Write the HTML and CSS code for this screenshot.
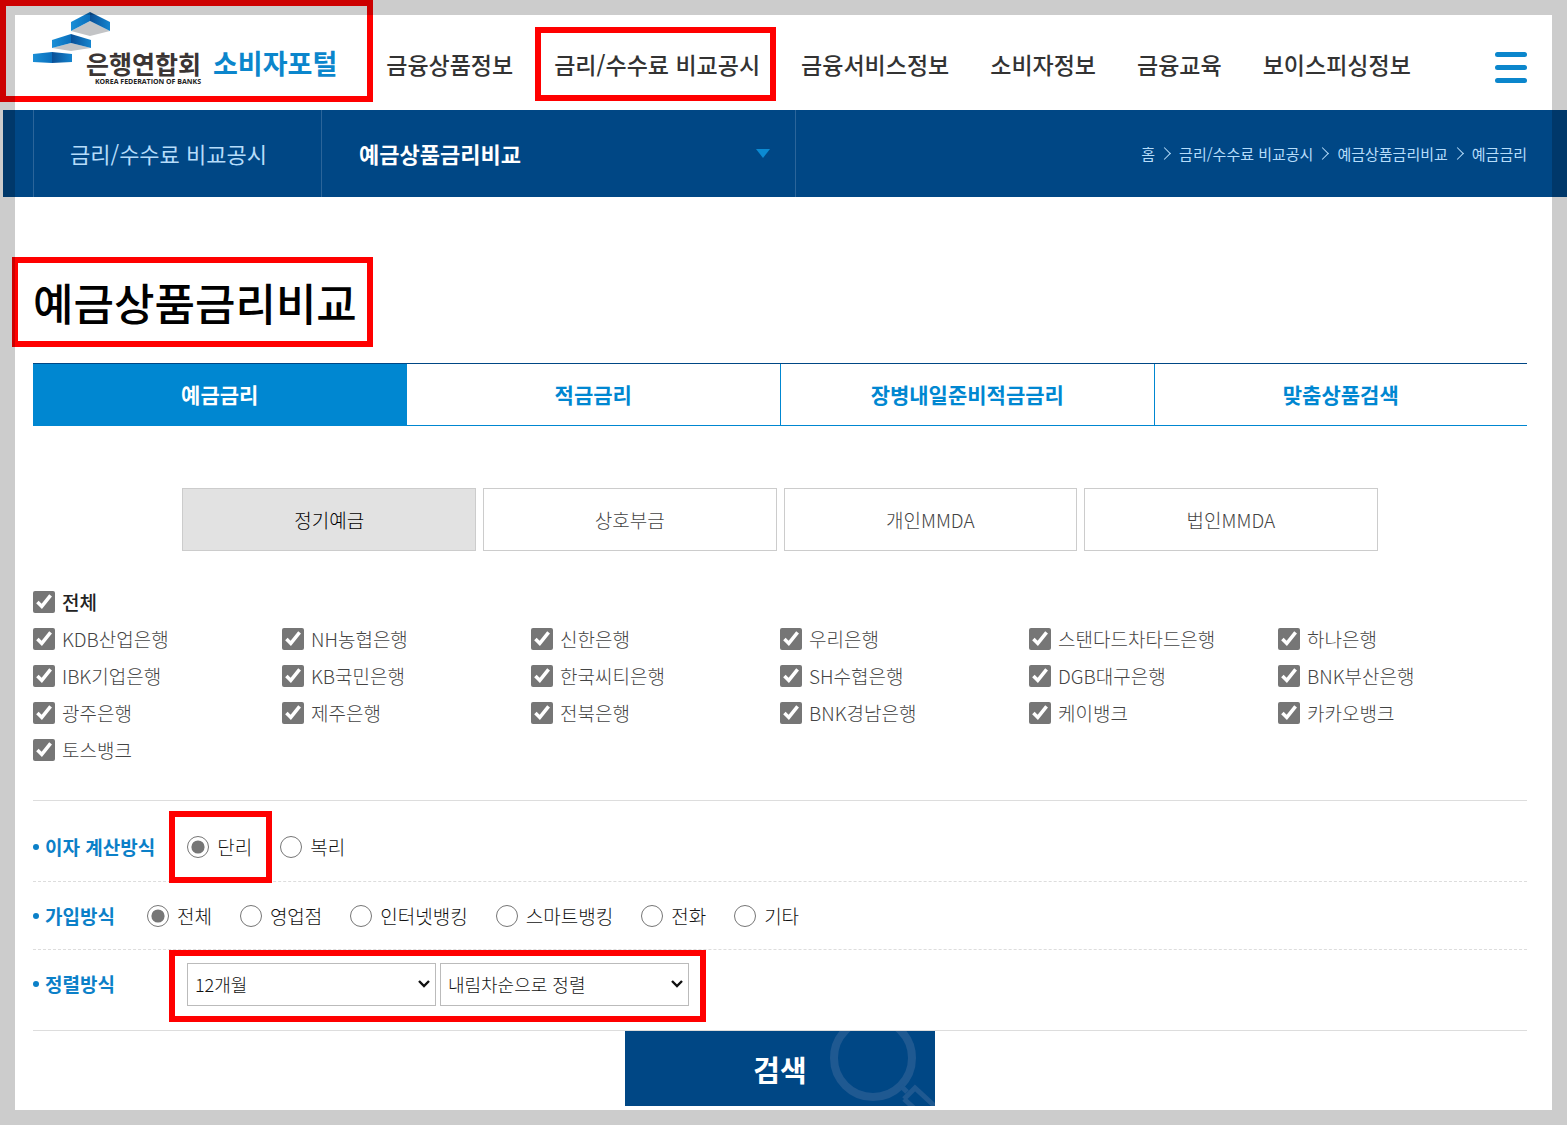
FILE: index.html
```html
<!DOCTYPE html>
<html lang="ko">
<head>
<meta charset="utf-8">
<meta name="viewport" content="width=device-width, initial-scale=1">
<title>예금상품금리비교 - 은행연합회 소비자포털</title>
<link rel="stylesheet" href="styles.css">
</head>
<body>
<header class="header">
  <a class="logo marked marked-logo" href="#">
    <svg class="logo-mark" viewBox="0 0 78 52" width="78" height="52" aria-hidden="true">
      <defs>
        <linearGradient id="face" x1="0" x2="1" y1="0" y2="0"><stop offset="0" stop-color="#1b8fd6"/><stop offset="1" stop-color="#0a6fbd"/></linearGradient>
        <linearGradient id="side" x1="0" x2="1" y1="0" y2="0"><stop offset="0" stop-color="#0a4f96"/><stop offset="1" stop-color="#1585cf"/></linearGradient>
      </defs>
      <path fill="#c3c4c6" d="M38 19 57 9 77 19 57 24zM19 36 38 31 58 36 38 39z"/>
      <path fill="url(#face)" d="M38 10 57 0V9L38 19z"/>
      <path fill="url(#side)" d="M57 0 77 10V19L57 9z"/>
      <path fill="url(#face)" d="M19 28 38 22V31L19 36z"/>
      <path fill="url(#side)" d="M38 22 58 28V36L38 31z"/>
      <path fill="url(#face)" d="M0 42 19 40V51L0 50z"/>
      <path fill="url(#side)" d="M19 40 39 42V50L19 51z"/>
    </svg>
    <span class="logo-name"><strong>은행연합회</strong><small>KOREA FEDERATION OF BANKS</small></span>
    <span class="logo-portal">소비자포털</span>
  </a>
  <nav class="gnb" aria-label="주 메뉴">
    <a href="#">금융상품정보</a>
    <a class="marked marked-nav" href="#">금리/수수료 비교공시</a>
    <a href="#">금융서비스정보</a>
    <a href="#">소비자정보</a>
    <a href="#">금융교육</a>
    <a href="#">보이스피싱정보</a>
  </nav>
  <button class="menu" type="button" aria-label="전체 메뉴"><span></span><span></span><span></span></button>
</header>

<div class="location">
  <a class="location-section" href="#">금리/수수료 비교공시</a>
  <button class="location-page" type="button">예금상품금리비교<span class="arrow"></span></button>
  <nav class="crumbs" aria-label="현재 위치">
    <a href="#">홈</a><i></i><a href="#">금리/수수료 비교공시</a><i></i><a href="#">예금상품금리비교</a><i></i><a href="#">예금금리</a>
  </nav>
</div>

<main class="content">
  <h1 class="title"><span class="marked marked-title">예금상품금리비교</span></h1>
  <nav class="tabs" aria-label="금리 종류">
    <a class="on" href="#">예금금리</a><a href="#">적금금리</a><a href="#">장병내일준비적금금리</a><a href="#">맞춤상품검색</a>
  </nav>

  <form class="search">
    <div class="kinds">
      <button class="on" type="button">정기예금</button>
      <button type="button">상호부금</button>
      <button type="button">개인MMDA</button>
      <button type="button">법인MMDA</button>
    </div>

    <div class="banks">
      <label class="all"><input type="checkbox" checked>전체</label>
      <label><input type="checkbox" checked>KDB산업은행</label>
      <label><input type="checkbox" checked>NH농협은행</label>
      <label><input type="checkbox" checked>신한은행</label>
      <label><input type="checkbox" checked>우리은행</label>
      <label><input type="checkbox" checked>스탠다드차타드은행</label>
      <label><input type="checkbox" checked>하나은행</label>
      <label><input type="checkbox" checked>IBK기업은행</label>
      <label><input type="checkbox" checked>KB국민은행</label>
      <label><input type="checkbox" checked>한국씨티은행</label>
      <label><input type="checkbox" checked>SH수협은행</label>
      <label><input type="checkbox" checked>DGB대구은행</label>
      <label><input type="checkbox" checked>BNK부산은행</label>
      <label><input type="checkbox" checked>광주은행</label>
      <label><input type="checkbox" checked>제주은행</label>
      <label><input type="checkbox" checked>전북은행</label>
      <label><input type="checkbox" checked>BNK경남은행</label>
      <label><input type="checkbox" checked>케이뱅크</label>
      <label><input type="checkbox" checked>카카오뱅크</label>
      <label><input type="checkbox" checked>토스뱅크</label>
    </div>

    <div class="option option-first" role="group" aria-labelledby="calc">
      <span class="option-name" id="calc">이자 계산방식</span>
      <div class="choices">
        <label class="marked marked-radio"><input type="radio" name="calc" checked>단리</label>
        <label><input type="radio" name="calc">복리</label>
      </div>
    </div>
    <div class="option" role="group" aria-labelledby="join">
      <span class="option-name" id="join">가입방식</span>
      <div class="choices">
        <label><input type="radio" name="join" checked>전체</label>
        <label><input type="radio" name="join">영업점</label>
        <label><input type="radio" name="join">인터넷뱅킹</label>
        <label><input type="radio" name="join">스마트뱅킹</label>
        <label><input type="radio" name="join">전화</label>
        <label><input type="radio" name="join">기타</label>
      </div>
    </div>
    <div class="option option-last" role="group" aria-labelledby="sort">
      <span class="option-name" id="sort">정렬방식</span>
      <div class="selects marked marked-selects">
        <select aria-label="기간"><option>12개월</option></select>
        <select aria-label="정렬 순서"><option>내림차순으로 정렬</option></select>
      </div>
    </div>

    <button class="submit" type="submit">검색
      <svg class="submit-icon" viewBox="0 0 110 75" width="110" height="75" fill="none" stroke="#1f5991" aria-hidden="true">
        <circle cx="48" cy="27" r="39" stroke-width="8"/>
        <path stroke-width="5" d="M76 55 82 61M79 68 90 57 114 79M79 68 90 78"/>
      </svg>
    </button>
  </form>
</main>
</body>
</html>
```
FILE: styles.css
```css
* { box-sizing: border-box; }

body {
  margin: 0;
  background: #fff;
  color: #333;
  font-family: "Noto Sans CJK KR", sans-serif;
  font-size: 19px;
}

/* translucent frame laid over the whole window */
body::after {
  content: "";
  position: fixed;
  inset: 0;
  z-index: 10;
  border: 15px solid rgba(0, 0, 0, .2);
  pointer-events: none;
}

a { color: inherit; text-decoration: none; }
button, select, input { font: inherit; margin: 0; }
button { cursor: pointer; }

/* red call-out boxes */
.marked { position: relative; }
.marked::after {
  content: "";
  position: absolute;
  border: 6px solid #f00;
  pointer-events: none;
}
.marked-logo::after { inset: 0 -36px 8px -33px; }
.marked-nav::after { inset: -18px -16px -17px -19px; }
.marked-title::after { inset: 0 -16px 0 -21px; }
.marked-radio::after { inset: -22px -20px -22px -18px; }
.marked-selects::after { inset: -13px -17px -16px -18px; }

.header {
  display: flex;
  align-items: center;
  height: 110px;
  padding: 0 40px 0 33px;
  white-space: nowrap;
}
.logo {
  display: flex;
  gap: 12px;
  align-self: stretch;
  padding: 48px 0 0 53px;
}
.logo-mark { position: absolute; left: 0; top: 12px; }
.logo-name { display: flex; flex-direction: column; align-items: flex-end; }
.logo-name strong { font-size: 25px; line-height: 30px; color: #3b3534; }
.logo-name small {
  font: bold 7px/8px "Open Sans", sans-serif;
  color: #222;
}
.logo-portal { font-size: 27px; font-weight: 700; line-height: 30px; color: #0b86cc; }

.gnb {
  display: flex;
  gap: 41px;
  margin: 18px 0 0 49px;
  font-size: 23px;
  font-weight: 500;
  line-height: 39px;
}
.menu {
  display: flex;
  flex-direction: column;
  gap: 8px;
  width: 32px;
  margin: 24px 0 0 auto;
  padding: 0;
  border: 0;
  background: none;
}
.menu span { height: 5px; border-radius: 3px; background: #0b86cc; }

.location {
  display: flex;
  height: 87px;
  margin-left: 3px;
  padding: 0 40px 0 30px;
  background: #004785;
  color: #b5dcfa;
  font-size: 22px;
  line-height: 87px;
  white-space: nowrap;
}
.location-section {
  width: 288px;
  padding-left: 36px;
  border-left: 1px solid #2b659a;
}
.location-page {
  display: flex;
  justify-content: space-between;
  align-items: center;
  width: 475px;
  padding: 0 25px 0 37px;
  border: solid #2b659a;
  border-width: 0 1px;
  background: none;
  color: #fff;
  font-weight: 700;
}
.arrow {
  border: solid transparent;
  border-width: 9px 7px 0;
  border-top-color: #0b8ad2;
}
.crumbs {
  display: flex;
  align-items: center;
  margin-left: auto;
  font-size: 15px;
  line-height: 85px;
}
.crumbs i {
  width: 9px;
  height: 9px;
  margin: 0 10px 0 5px;
  border: solid #b5dcfa;
  border-width: 1px 1px 0 0;
  transform: rotate(45deg);
}

.content { padding: 60px 40px 19px 33px; }
.title {
  margin: 0 0 16px;
  color: #000;
  font-size: 44px;
  font-weight: 500;
  line-height: 90px;
}
.title span { display: inline-block; }

.tabs {
  display: grid;
  grid-template-columns: repeat(4, 1fr);
  height: 63px;
  border-top: 1px solid #004785;
  border-bottom: 1px solid #0087d1;
  color: #0087d1;
  font-size: 21px;
  font-weight: 700;
  line-height: 60px;
  text-align: center;
}
.tabs a + a + a { border-left: 1px solid #0087d1; }
.tabs .on { background: #0087d1; color: #fff; }

.kinds {
  display: grid;
  grid-template-columns: repeat(4, 1fr);
  gap: 7px;
  padding: 62px 10% 0;
}
.kinds button {
  height: 63px;
  border: 1px solid #ccc;
  background: #fff;
  color: #444;
  font-weight: 300;
}
.kinds .on { background: #e2e2e2; color: #000; }

.banks {
  display: grid;
  grid-template-columns: repeat(6, 1fr);
  grid-auto-rows: 37px;
  margin-top: 32px;
  padding-bottom: 32px;
  border-bottom: 1px solid #ddd;
  color: #444;
  font-weight: 300;
  white-space: nowrap;
}
.banks label, .choices label { display: flex; align-items: center; }
.banks .all { grid-column: 1 / -1; color: #222; font-weight: 500; }
input {
  width: 22px;
  height: 22px;
  accent-color: #767676;
}
.banks input { margin-right: 7px; }
.choices input { margin-right: 8px; }

.option {
  display: flex;
  align-items: center;
  gap: 32px;
  height: 68px;
  border-bottom: 1px dashed #ddd;
  color: #111;
  font-weight: 300;
  line-height: 28px;
  white-space: nowrap;
}
.option-first { height: 81px; padding-top: 12px; }
.option-last { height: 81px; padding-bottom: 12px; border-bottom: 1px solid #ddd; }
.option-name {
  display: flex;
  align-items: center;
  gap: 6px;
  color: #0b80c8;
  font-weight: 700;
}
.option-name::before {
  content: "";
  width: 6px;
  height: 6px;
  border-radius: 50%;
  background: #0b80c8;
}
.choices { display: flex; gap: 28px; }
.selects { display: flex; gap: 4px; margin-left: 40px; }
select {
  appearance: none;
  width: 249px;
  height: 43px;
  padding: 0 24px 0 7px;
  border: 1px solid #bbb;
  border-radius: 0;
  background: #fff url("data:image/svg+xml,%3Csvg xmlns='http://www.w3.org/2000/svg' width='12' height='8'%3E%3Cpath d='M1 1l5 5 5-5' fill='none' stroke='%23111' stroke-width='2.4'/%3E%3C/svg%3E") no-repeat right 5px center;
  color: #111;
  font-size: 18px;
}

.submit {
  position: relative;
  display: block;
  width: 310px;
  height: 75px;
  margin: 0 auto;
  border: 0;
  background: #004785;
  color: #fff;
  font-size: 29px;
  font-weight: 700;
}
.submit-icon { position: absolute; top: 0; right: 0; }
```
